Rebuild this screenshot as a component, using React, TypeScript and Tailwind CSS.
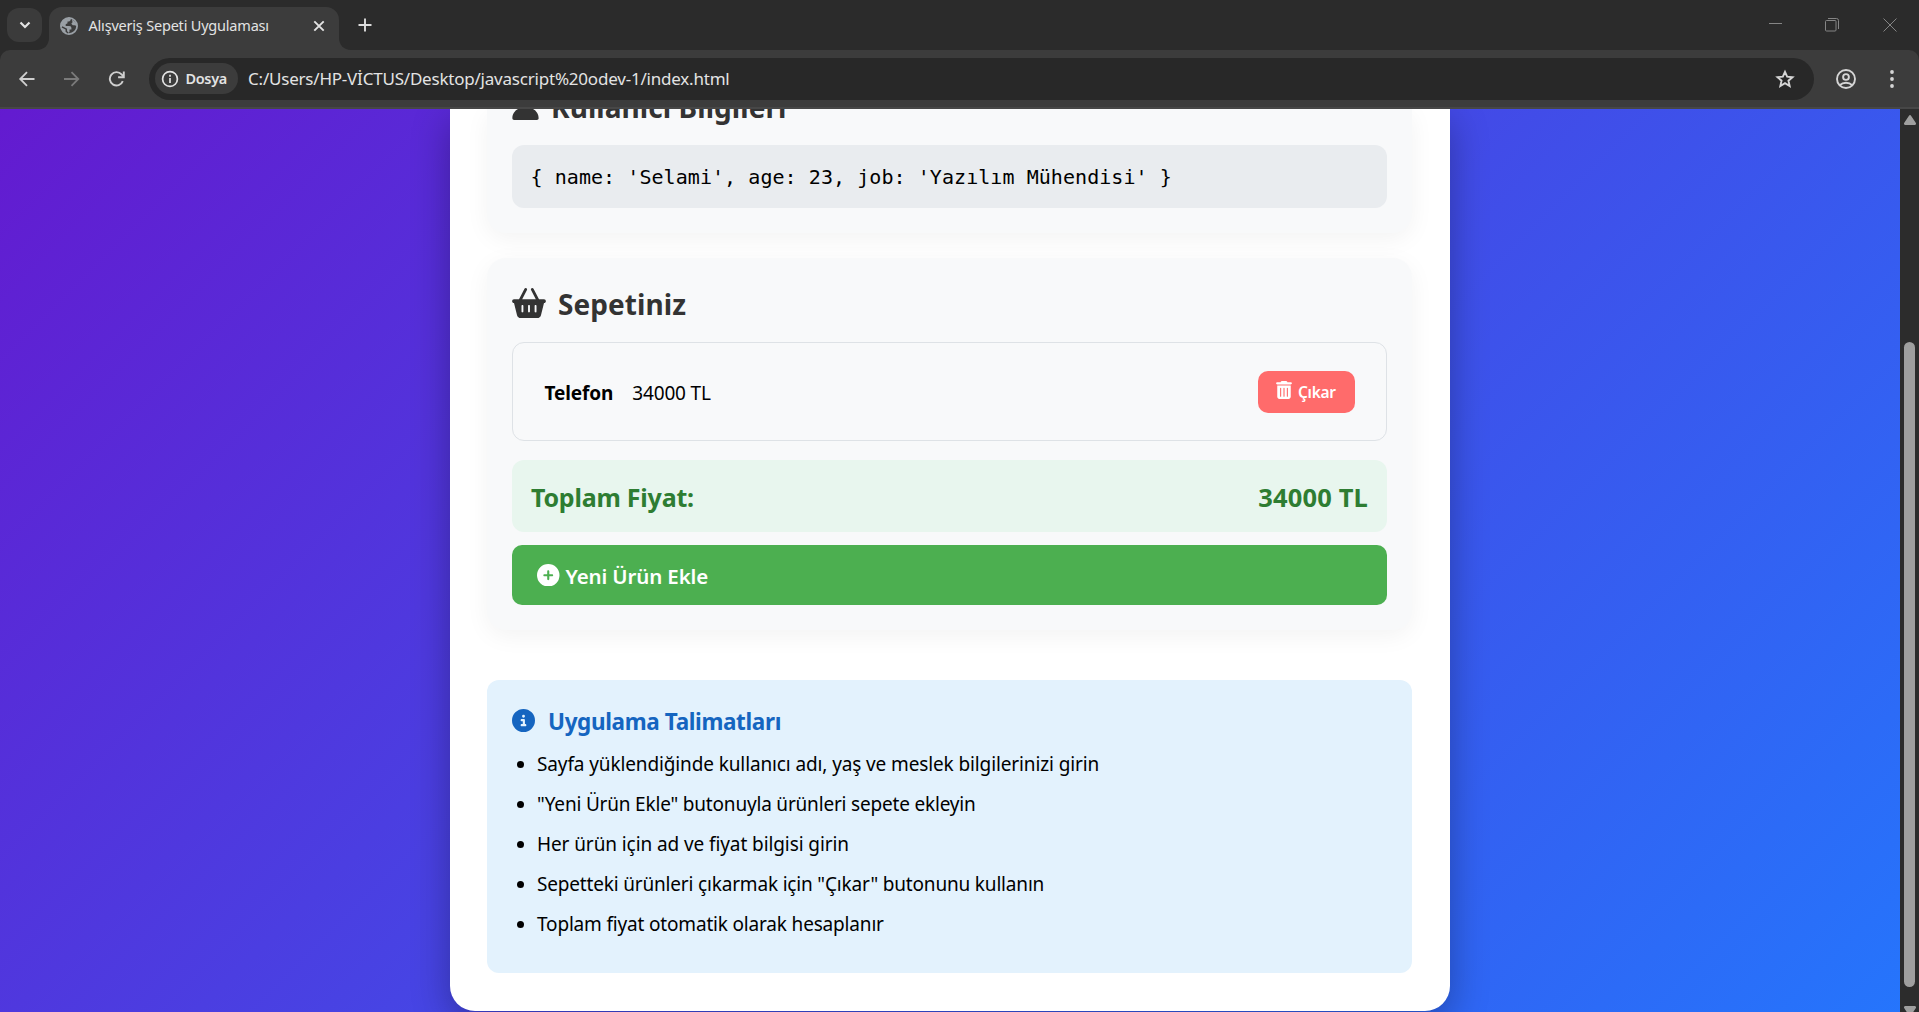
import type { ReactNode } from 'react';
import { FaBasketShopping, FaCircleInfo, FaCirclePlus, FaTrashCan, FaUser } from 'react-icons/fa6';

const instructions = [
  { text: 'Sayfa yüklendiğinde kullanıcı adı, yaş ve meslek bilgilerinizi girin', tracking: 'tracking-[-0.12px]' },
  { text: '"Yeni Ürün Ekle" butonuyla ürünleri sepete ekleyin', tracking: 'tracking-[-0.19px]' },
  { text: 'Her ürün için ad ve fiyat bilgisi girin', tracking: 'tracking-[-0.09px]' },
  { text: 'Sepetteki ürünleri çıkarmak için "Çıkar" butonunu kullanın', tracking: 'tracking-[-0.175px]' },
  { text: 'Toplam fiyat otomatik olarak hesaplanır', tracking: 'tracking-[-0.175px]' },
];

function TabStrip() {
  return (
    <div className="flex h-[50px] shrink-0 bg-[#2b2b2b]">
      <button className="mt-2 ml-[7px] flex h-[34px] w-[35px] items-center justify-center rounded-xl bg-[#3b3b3b]">
        <svg width="12" height="8" viewBox="0 0 12 8" fill="none" stroke="#e3e3e3" strokeWidth="2.2">
          <path d="M1.5 1.5 6 6l4.500-4.500" />
        </svg>
      </button>
      <svg className="mt-[38px] -mr-px ml-[-5px]" width="13" height="12" viewBox="0 0 13 12">
        <path d="M12 0V12H0C7 12 12 7 12 0z" fill="#3c3c3c" />
        <path d="M12 0h1v12h-1z" fill="#3c3c3c" />
      </svg>
      <div className="mt-[7px] flex h-[43px] w-[290px] items-center rounded-t-[13px] bg-[#3c3c3c] pr-[14px] pb-[6px] pl-[11px]">
        <svg width="18" height="18" viewBox="0 0 18 18">
          <circle cx="9" cy="9" r="8.100" fill="#3c3c3c" stroke="#9aa0a6" strokeWidth="1.800" />
          <path d="M1.500 5.500C3 2.300 6 .8 9.500 1L11 2.800 9.200 4.500H7.500V6.300L5.700 7.200V9H9.300C10.600 9 11.400 9.900 11.400 11V12.500H9.500V15L8 16.800C4 16.500 1.300 13.300 1 9.500z" fill="#9aa0a6" />
          <path d="M12 2.500 15.500 5.200 16.800 9 14.500 8.200H12.800L11.300 6.700 12.500 5.200z" fill="#9aa0a6" />
          <path d="M2 9.800 6.300 12.200V14.500L8.200 16" fill="none" stroke="#3c3c3c" strokeWidth="1.500" />
        </svg>
        <span className="ml-[10.500px] text-[14.500px] tracking-[-0.2px] whitespace-nowrap text-[#e3e3e3]">Alışveriş Sepeti Uygulaması</span>
        <svg className="ml-auto" width="12" height="12" viewBox="0 0 12 12" stroke="#e3e3e3" strokeWidth="1.900">
          <path d="M1.300 1.300 10.700 10.700M10.700 1.300 1.300 10.700" />
        </svg>
      </div>
      <svg className="mt-[38px] -ml-px" width="13" height="12" viewBox="0 0 13 12">
        <path d="M0 0h1C1 7 6 12 13 12H0z" fill="#3c3c3c" />
      </svg>
      <svg className="mt-[18px] ml-[7px]" width="14" height="14" viewBox="0 0 14 14" stroke="#dcdcdc" strokeWidth="1.900">
        <path d="M7 .5v13M.5 7h13" />
      </svg>
      <div className="mt-[18px] mr-[22px] ml-auto flex gap-[43px]">
        <svg width="14" height="14" viewBox="0 0 14 14" stroke="#858585" fill="none">
          <path d="M1 5.500h13" />
        </svg>
        <svg width="14" height="14" viewBox="0 0 14 14" stroke="#858585" fill="none">
          <rect x=".5" y="2.500" width="10.500" height="10.500" rx="1" />
          <path d="M3 .5h8.500a2 2 0 0 1 2 2V11" />
        </svg>
        <svg className="ml-[1px]" width="14" height="14" viewBox="0 0 14 14" stroke="#858585" fill="none">
          <path d="M.5.5l13 13M13.500.5l-13 13" />
        </svg>
      </div>
    </div>
  );
}

function Toolbar() {
  return (
    <div className="shrink-0 bg-[#2b2b2b]">
      <div className="flex h-[59px] items-center rounded-t-[10px] border-b-2 border-[#474747] bg-[#3c3c3c] pl-[18px]">
        <svg width="17" height="16" viewBox="0 0 17 16" fill="none" stroke="#cfcfcf" strokeWidth="1.800">
          <path d="M16.500 8H2.500M9 1.200 2.200 8l6.800 6.800" />
        </svg>
        <svg className="ml-[28px]" width="17" height="16" viewBox="0 0 17 16" fill="none" stroke="#7a7a7a" strokeWidth="1.800">
          <path d="M1 8h14M8.500 1.200 15.300 8l-6.800 6.800" />
        </svg>
        <svg className="ml-[28px]" width="18" height="16" viewBox="0 0 18 16" fill="none" stroke="#cfcfcf" strokeWidth="1.900">
          <path d="M14.800 10.200A6.700 6.700 0 1 1 13.600 3.400L15.500 5.500" />
          <path d="M15.800.5v5.700h-5.700" />
        </svg>
        <div className="ml-[23px] flex h-[42px] w-[1665px] items-center rounded-full bg-[#282828] pr-[19px] pl-[6px]">
          <div className="flex h-[31px] w-[83px] items-center rounded-full bg-[#3c3c3c] pl-[6px]">
            <svg width="18" height="18" viewBox="0 0 18 18" fill="none" stroke="#e3e3e3" strokeWidth="1.700">
              <circle cx="9" cy="9" r="7.400" />
              <path d="M9 8v5M9 4.800v1.900" />
            </svg>
            <span className="ml-[6.500px] text-[14.500px] font-semibold tracking-[-0.35px] text-[#e3e3e3]">Dosya</span>
          </div>
          <span className="ml-[10px] pt-px text-[17px] tracking-[-0.21px] whitespace-nowrap text-[#e3e3e3]">
            C:/Users/HP-VİCTUS/Desktop/javascript%20odev-1/index.html
          </span>
          <svg className="ml-auto" width="20" height="20" viewBox="0 0 20 20" fill="none" stroke="#d5d5d5" strokeWidth="1.900" strokeLinejoin="miter">
            <path d="M10 2.800 12.150 7.700 17.500 8.200 13.450 11.700 14.650 17 10 14.200 5.350 17 6.550 11.700 2.500 8.200 7.850 7.700z" />
          </svg>
        </div>
        <svg className="ml-[22px]" width="20" height="20" viewBox="0 0 20 20" fill="none" stroke="#d5d5d5" strokeWidth="1.900">
          <circle cx="10" cy="10" r="9" />
          <circle cx="10" cy="8" r="2.900" />
          <path d="M3.700 16.200C5.500 14.500 7.600 13.700 10 13.700s4.500.8 6.300 2.500" />
        </svg>
        <svg className="ml-[33.500px]" width="4" height="18" viewBox="0 0 4 18" fill="#d5d5d5">
          <circle cx="2" cy="2" r="1.900" />
          <circle cx="2" cy="9" r="1.900" />
          <circle cx="2" cy="16" r="1.900" />
        </svg>
      </div>
    </div>
  );
}

function SectionTitle({ icon, children }: { icon: ReactNode; children: ReactNode }) {
  return (
    <h2 className="flex h-10 items-center gap-3 text-[28px] font-bold text-[#333333]">
      {icon}
      <span className="pt-[2px] tracking-[0.06px]">{children}</span>
    </h2>
  );
}

function Page() {
  return (
    <main className="flex min-w-0 flex-1 justify-center overflow-hidden bg-[linear-gradient(135deg,#6a11cb_0%,#2575fc_100%)] bg-[size:1900px_1211px] bg-[position:0_-300px]">
      <div className="h-[902px] w-[1000px] rounded-b-[25px] bg-white px-[37px] shadow-[0_12px_38px_rgba(0,0,0,0.3)]">
        <section className="h-[124px] w-[925px] rounded-b-[19px] bg-[#f8f9fa] px-[25px] shadow-[0_6px_25px_rgba(0,0,0,0.05)]">
          <div className="-translate-y-[23px]">
            <SectionTitle icon={<FaUser className="mb-[2px] h-[30px] w-[27px]" />}>Kullanıcı Bilgileri</SectionTitle>
          </div>
          <div className="mt-[-4px] flex h-[63px] items-center rounded-xl bg-[#e9ecef] px-[18.500px] font-['DejaVu_Sans_Mono',monospace] text-[20px] tracking-[0.06px] whitespace-pre text-black">
            {"{ name: 'Selami', age: 23, job: 'Yazılım Mühendisi' }"}
          </div>
        </section>

        <section className="mt-[25px] h-[372px] w-[925px] rounded-[19px] bg-[#f8f9fa] px-[25px] pt-[25px] shadow-[0_6px_25px_rgba(0,0,0,0.05)]">
          <SectionTitle icon={<FaBasketShopping className="h-[30px] w-[34px]" />}>Sepetiniz</SectionTitle>
          <div className="mt-[19px] flex h-[99px] items-center rounded-xl border border-[#dee2e6] pr-[31px] pl-[31.500px] text-[19px] text-black">
            <strong className="pt-1 font-bold tracking-[-0.12px]">Telefon</strong>
            <span className="ml-[19px] pt-1 tracking-[-0.15px]">34000 TL</span>
            <button className="ml-auto flex h-[42px] w-[97px] items-center rounded-[10px] bg-[#ff6b6b] pl-[18px] text-white">
              <FaTrashCan className="mt-[-3px] h-[18px] w-4" />
              <span className="ml-[6px] pt-[3px] text-[15.500px] font-semibold tracking-[-0.3px]">Çıkar</span>
            </button>
          </div>
          <div className="mt-[19px] flex h-[72px] items-center justify-between rounded-xl bg-[#e8f6ee] px-[19px] font-bold text-[#2e7d32]">
            <span className="pt-1 text-[25px] tracking-[-0.22px]">Toplam Fiyat:</span>
            <span className="pt-[2px] text-[25.500px] tracking-[0.15px]">34000 TL</span>
          </div>
          <button className="mt-[13px] flex h-[60px] w-full items-center rounded-[10px] bg-[#4caf50] pl-[25px] text-white">
            <FaCirclePlus className="h-[22.500px] w-[22.500px]" />
            <span className="ml-[6px] pt-[2px] text-[20.500px] font-semibold tracking-[-0.14px]">Yeni Ürün Ekle</span>
          </button>
        </section>

        <section className="mt-[50px] h-[293px] w-[925px] rounded-xl bg-[#e3f2fd] px-[25px] pt-[25px]">
          <h3 className="flex h-8 items-center gap-[13px] text-[22.500px] font-bold text-[#1565c0]">
            <FaCircleInfo className="mb-[2px] h-[23px] w-[23px]" />
            <span className="pt-[2px] tracking-[-0.37px]">Uygulama Talimatları</span>
          </h3>
          <ul className="mt-[7px] list-disc pl-[25px] text-[19px] leading-10 text-black">
            {instructions.map((item) => (
              <li key={item.text} className={item.tracking}>
                {item.text}
              </li>
            ))}
          </ul>
        </section>
      </div>
    </main>
  );
}

function Scrollbar() {
  return (
    <div className="flex w-[19px] shrink-0 flex-col items-center bg-[#2c2c2c] pt-[6px]">
      <svg className="shrink-0" width="12" height="10" viewBox="0 0 12 10" fill="#9f9f9f">
        <path d="M4.800.9a1.500 1.500 0 0 1 2.400 0l4.500 6.800A1.400 1.400 0 0 1 10.500 10h-9A1.400 1.400 0 0 1 .3 7.700z" />
      </svg>
      <div className="mt-[217px] h-[645px] w-[11px] shrink-0 rounded-full bg-[#9f9f9f]" />
      <svg className="mt-[19px] shrink-0" width="12" height="10" viewBox="0 0 12 10" fill="#9f9f9f">
        <path d="M4.800 9.100a1.500 1.500 0 0 0 2.400 0l4.500-6.800A1.400 1.400 0 0 0 10.500 0h-9A1.400 1.400 0 0 0 .3 2.300z" />
      </svg>
    </div>
  );
}

export default function App() {
  return (
    <div className="flex h-[1012px] w-[1919px] flex-col overflow-hidden font-['Noto_Sans',sans-serif]">
      <TabStrip />
      <Toolbar />
      <div className="flex min-h-0 flex-1 overflow-hidden">
        <Page />
        <Scrollbar />
      </div>
    </div>
  );
}
